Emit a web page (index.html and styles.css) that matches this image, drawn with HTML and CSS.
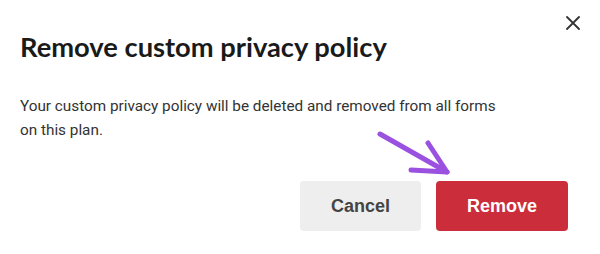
FILE: index.html
```html
<!DOCTYPE html>
<html lang="en">
<head>
    <meta charset="UTF-8">
    <meta name="viewport" content="width=device-width, initial-scale=1.0">
    <title>Remove custom privacy policy</title>
    <link rel="stylesheet" href="styles.css">
</head>
<body>
    <div class="modal" role="dialog" aria-labelledby="modalTitle">
        <div class="modal-header">
            <h2 id="modalTitle" class="modal-title">Remove custom privacy policy</h2>
            <button class="close-btn" aria-label="Close">
                <svg width="14" height="14" viewBox="0 0 14 14" fill="none" stroke="#333" stroke-width="1.8" stroke-linecap="round">
                    <path d="M1 1L13 13M13 1L1 13"/>
                </svg>
            </button>
        </div>

        <p class="modal-text">Your custom privacy policy will be deleted and removed from all forms on this plan.</p>

        <div class="modal-footer">
            <button class="btn btn-cancel">Cancel</button>
            <button class="btn btn-remove">Remove</button>
        </div>

        <!-- flecha de anotación -->
        <svg class="pointer-arrow" width="90" height="60" viewBox="0 0 90 60" fill="none" stroke="#9b51e0" stroke-width="5" stroke-linecap="round" stroke-linejoin="round">
            <path d="M10 14L77 52"/>
            <path d="M58 23L77 52L41 50"/>
        </svg>
    </div>
</body>
</html>
```

FILE: styles.css
```css
body {
    margin: 0;
    font-family: Roboto, Arial, sans-serif;
    background: #fff;
    color: #333;
}

.modal {
    position: relative;
    width: 600px;
    height: 254px;
    box-sizing: border-box;
    padding: 16px 20px 0 20px;
}

.modal-header {
    display: flex;
    justify-content: space-between;
    align-items: flex-start;
}

.modal-title {
    margin: 13px 0 0;
    font-family: Lato, Arial, sans-serif;
    font-size: 27.3px;
    line-height: 36px;
    font-weight: 700;
    color: #1a1a1a;
}

.close-btn {
    background: none;
    border: none;
    padding: 0;
    width: 14px;
    height: 14px;
    cursor: pointer;
    display: flex;
}

.modal-text {
    max-width: 485px;
    margin: 29px 0 0;
    font-size: 15.3px;
    line-height: 24px;
    color: #333;
}

.modal-footer {
    display: flex;
    justify-content: flex-end;
    gap: 15px;
    margin-top: 39px;
    padding-right: 12px;
}

.btn {
    height: 50px;
    padding: 0 31px;
    font-family: "Liberation Sans", Arial, sans-serif;
    font-size: 18px;
    font-weight: 700;
    border: none;
    border-radius: 4px;
    cursor: pointer;
}

.btn-cancel {
    background-color: #eeeeee;
    color: #444;
}

.btn-remove {
    background-color: #cc2d3b;
    color: #fff;
}

.pointer-arrow {
    position: absolute;
    left: 370px;
    top: 120px;
}
```
